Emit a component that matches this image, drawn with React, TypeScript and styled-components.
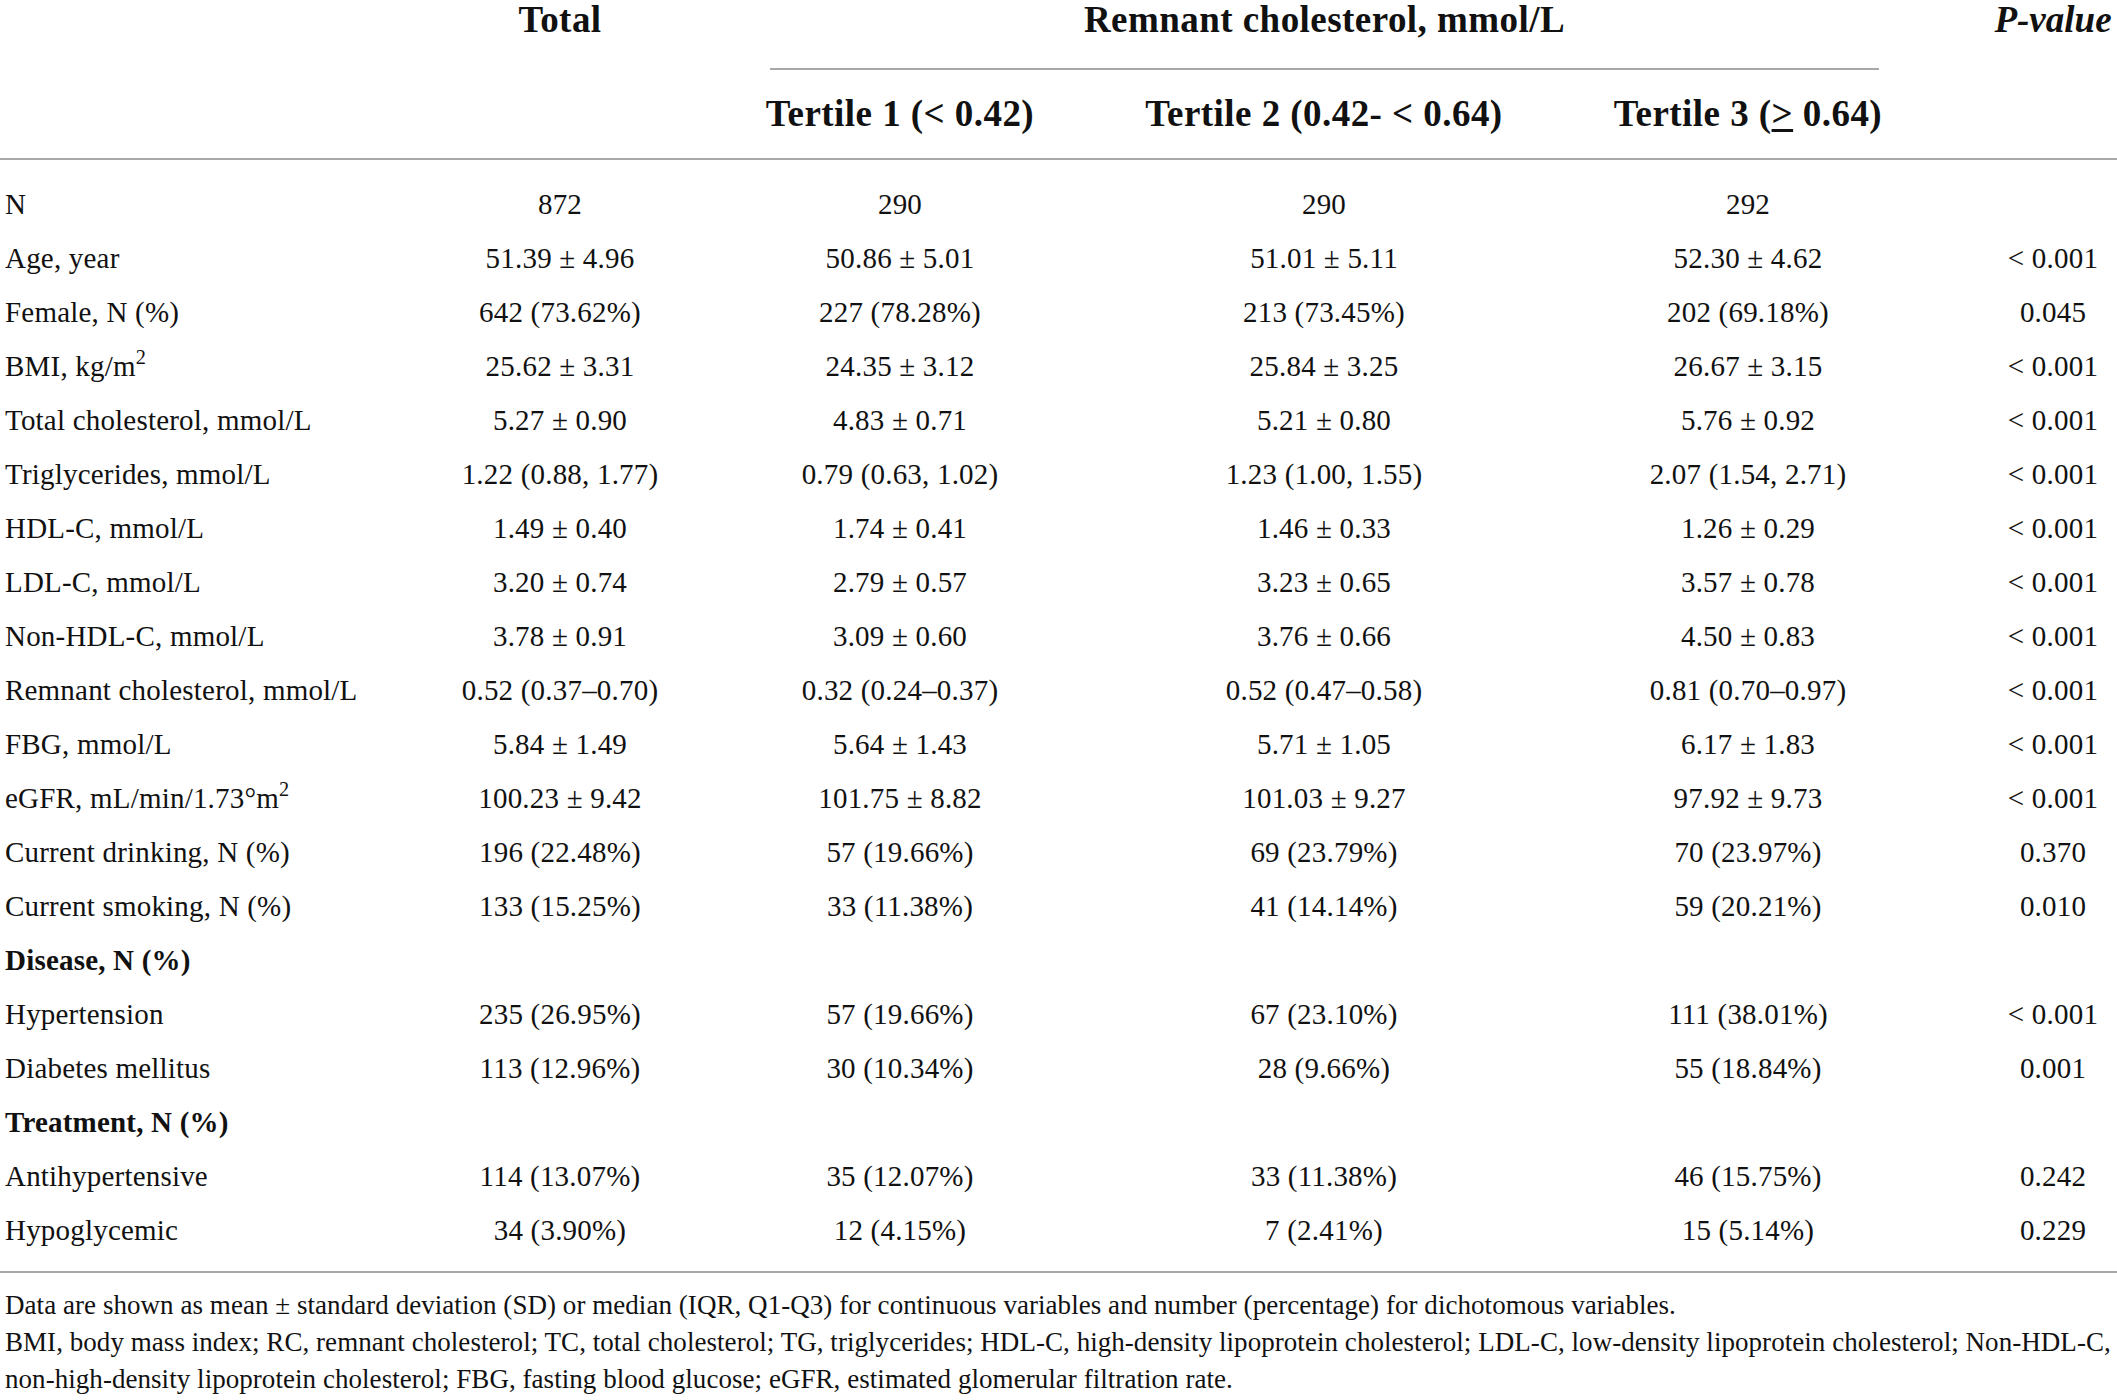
import React from "react";
import styled, { createGlobalStyle } from "styled-components";

const GlobalStyle = createGlobalStyle`
  html, body {
    margin: 0;
    padding: 0;
    background: #ffffff;
  }
  body {
    font-family: "Liberation Serif", "Times New Roman", serif;
    color: #111111;
  }
`;

const COLS = "360px 400px 280px 568px 280px 229px";
const RULE = "#a8a8a8";

const Table = styled.div`
  width: 2117px;
  display: flex;
  flex-direction: column;
`;

const Header = styled.div`
  display: flex;
  flex-direction: column;
  border-bottom: 2px solid ${RULE};
`;

const HeaderRow = styled.div<{ $h: number }>`
  display: grid;
  grid-template-columns: ${COLS};
  height: ${(p) => p.$h}px;
  align-items: start;
`;

const HeadCell = styled.div<{ $italic?: boolean; $col?: string; $pl?: number; $lh?: number }>`
  grid-column: ${(p) => p.$col || "auto"};
  font-family: "Liberation Serif", "Times New Roman", serif;
  font-weight: 700;
  font-style: ${(p) => (p.$italic ? "italic" : "normal")};
  font-size: 37px;
  letter-spacing: ${(p) => (p.$italic ? 0 : 0.45)}px;
  line-height: ${(p) => p.$lh || 40}px;
  text-align: center;
  white-space: nowrap;
  padding-left: ${(p) => p.$pl || 0}px;
`;

const GroupHead = styled(HeadCell)`
  margin: 0 9px 0 10px;
  padding-bottom: 28px;
  border-bottom: 2px solid ${RULE};
`;

const Under = styled.span`
  text-decoration: underline;
  text-decoration-thickness: 3px;
  text-underline-offset: 3px;
`;

const Body = styled.div`
  display: flex;
  flex-direction: column;
  padding: 17px 0 14px;
  border-bottom: 2px solid ${RULE};
`;

const Row = styled.div`
  display: grid;
  grid-template-columns: ${COLS};
  height: 54px;
  align-items: center;
  font-size: 29px;
  letter-spacing: 0.2px;
  line-height: 54px;
`;

const LabelCell = styled.div<{ $bold?: boolean }>`
  padding-left: 5px;
  white-space: nowrap;
  font-weight: ${(p) => (p.$bold ? 700 : 400)};
`;

const ValueCell = styled.div`
  text-align: center;
  white-space: nowrap;
`;

const PCell = styled(ValueCell)`
  padding-left: 101px;
`;

const Sup = styled.sup`
  font-size: 0.7em;
  line-height: 0;
  vertical-align: 0.6em;
`;

const Notes = styled.div`
  display: flex;
  flex-direction: column;
  padding: 14px 0 0 5px;
  font-size: 27px;
  letter-spacing: 0.05px;
  line-height: 37px;
`;

const NoteLine = styled.div`
  white-space: nowrap;
`;

type DataRow = { label: React.ReactNode; vals?: string[]; p?: string; section?: boolean };

const rows: DataRow[] = [
  { label: "N", vals: ["872", "290", "290", "292"], p: "" },
  { label: "Age, year", vals: ["51.39 ± 4.96", "50.86 ± 5.01", "51.01 ± 5.11", "52.30 ± 4.62"], p: "< 0.001" },
  { label: "Female, N (%)", vals: ["642 (73.62%)", "227 (78.28%)", "213 (73.45%)", "202 (69.18%)"], p: "0.045" },
  {
    label: (
      <>
        BMI, kg/m<Sup>2</Sup>
      </>
    ),
    vals: ["25.62 ± 3.31", "24.35 ± 3.12", "25.84 ± 3.25", "26.67 ± 3.15"],
    p: "< 0.001",
  },
  { label: "Total cholesterol, mmol/L", vals: ["5.27 ± 0.90", "4.83 ± 0.71", "5.21 ± 0.80", "5.76 ± 0.92"], p: "< 0.001" },
  { label: "Triglycerides, mmol/L", vals: ["1.22 (0.88, 1.77)", "0.79 (0.63, 1.02)", "1.23 (1.00, 1.55)", "2.07 (1.54, 2.71)"], p: "< 0.001" },
  { label: "HDL-C, mmol/L", vals: ["1.49 ± 0.40", "1.74 ± 0.41", "1.46 ± 0.33", "1.26 ± 0.29"], p: "< 0.001" },
  { label: "LDL-C, mmol/L", vals: ["3.20 ± 0.74", "2.79 ± 0.57", "3.23 ± 0.65", "3.57 ± 0.78"], p: "< 0.001" },
  { label: "Non-HDL-C, mmol/L", vals: ["3.78 ± 0.91", "3.09 ± 0.60", "3.76 ± 0.66", "4.50 ± 0.83"], p: "< 0.001" },
  { label: "Remnant cholesterol, mmol/L", vals: ["0.52 (0.37–0.70)", "0.32 (0.24–0.37)", "0.52 (0.47–0.58)", "0.81 (0.70–0.97)"], p: "< 0.001" },
  { label: "FBG, mmol/L", vals: ["5.84 ± 1.49", "5.64 ± 1.43", "5.71 ± 1.05", "6.17 ± 1.83"], p: "< 0.001" },
  {
    label: (
      <>
        eGFR, mL/min/1.73°m<Sup>2</Sup>
      </>
    ),
    vals: ["100.23 ± 9.42", "101.75 ± 8.82", "101.03 ± 9.27", "97.92 ± 9.73"],
    p: "< 0.001",
  },
  { label: "Current drinking, N (%)", vals: ["196 (22.48%)", "57 (19.66%)", "69 (23.79%)", "70 (23.97%)"], p: "0.370" },
  { label: "Current smoking, N (%)", vals: ["133 (15.25%)", "33 (11.38%)", "41 (14.14%)", "59 (20.21%)"], p: "0.010" },
  { label: "Disease, N (%)", section: true },
  { label: "Hypertension", vals: ["235 (26.95%)", "57 (19.66%)", "67 (23.10%)", "111 (38.01%)"], p: "< 0.001" },
  { label: "Diabetes mellitus", vals: ["113 (12.96%)", "30 (10.34%)", "28 (9.66%)", "55 (18.84%)"], p: "0.001" },
  { label: "Treatment, N (%)", section: true },
  { label: "Antihypertensive", vals: ["114 (13.07%)", "35 (12.07%)", "33 (11.38%)", "46 (15.75%)"], p: "0.242" },
  { label: "Hypoglycemic", vals: ["34 (3.90%)", "12 (4.15%)", "7 (2.41%)", "15 (5.14%)"], p: "0.229" },
];

export default function App() {
  return (
    <>
      <GlobalStyle />
      <Table>
        <Header>
          <HeaderRow $h={70}>
            <HeadCell $col="2">Total</HeadCell>
            <GroupHead $col="3 / 6">Remnant cholesterol, mmol/L</GroupHead>
            <HeadCell $col="6" $italic $pl={101}>
              P-value
            </HeadCell>
          </HeaderRow>
          <HeaderRow $h={88}>
            <HeadCell $col="3" $lh={88}>
              Tertile 1 (&lt; 0.42)
            </HeadCell>
            <HeadCell $col="4" $lh={88}>
              Tertile 2 (0.42- &lt; 0.64)
            </HeadCell>
            <HeadCell $col="5" $lh={88}>
              Tertile 3 (<Under>&gt;</Under> 0.64)
            </HeadCell>
          </HeaderRow>
        </Header>
        <Body>
          {rows.map((r, i) => (
            <Row key={i}>
              <LabelCell $bold={r.section}>{r.label}</LabelCell>
              {r.vals?.map((v, j) => (
                <ValueCell key={j}>{v}</ValueCell>
              ))}
              {r.vals && <PCell>{r.p}</PCell>}
            </Row>
          ))}
        </Body>
        <Notes>
          <NoteLine>
            Data are shown as mean ± standard deviation (SD) or median (IQR, Q1-Q3) for continuous variables and number
            (percentage) for dichotomous variables.
          </NoteLine>
          <NoteLine>
            BMI, body mass index; RC, remnant cholesterol; TC, total cholesterol; TG, triglycerides; HDL-C, high-density
            lipoprotein cholesterol; LDL-C, low-density lipoprotein cholesterol; Non-HDL-C,
          </NoteLine>
          <NoteLine>
            non-high-density lipoprotein cholesterol; FBG, fasting blood glucose; eGFR, estimated glomerular filtration
            rate.
          </NoteLine>
        </Notes>
      </Table>
    </>
  );
}
